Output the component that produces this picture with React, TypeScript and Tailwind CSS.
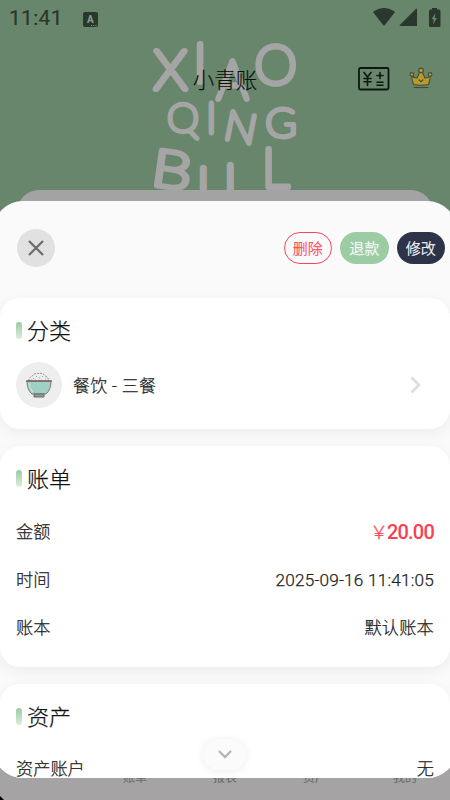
import React from 'react';

const LOGO_LETTERS = [
  { char: 'X', x: 170.5, y: 88.5, size: 54, width: 1.02, rotate: 0, stroke: 6 },
  { char: 'I', x: 200, y: 82, size: 54, width: 1, rotate: 0, stroke: 6 },
  { char: 'A', x: 232.5, y: 98.500, size: 53, width: 0.92, rotate: 0, stroke: 6 },
  { char: 'O', x: 275.7, y: 84, size: 54, width: 1, rotate: 0, stroke: 5.8 },
  { char: 'Q', x: 183, y: 132, size: 40, width: 1.02, rotate: 0, stroke: 4.5 },
  { char: 'I', x: 211.3, y: 132.5, size: 41, width: 1, rotate: 0, stroke: 4.8 },
  { char: 'N', x: 238, y: 141.5, size: 41, width: 1.05, rotate: 11, stroke: 4.6 },
  { char: 'G', x: 281, y: 137, size: 40, width: 1.05, rotate: 0, stroke: 4.8 },
  { char: 'B', x: 169.5, y: 187.500, size: 51, width: 1.25, rotate: 8, stroke: 5.5 },
  { char: 'I', x: 203.3, y: 200, size: 45, width: 1, rotate: 0, stroke: 6.5 },
  { char: 'I', x: 230.3, y: 197, size: 45, width: 1, rotate: 0, stroke: 6.5 },
  { char: 'L', x: 275.5, y: 187, size: 53, width: 1.02, rotate: 0, stroke: 5.8 },
];

const TABS = ['', '账单', '报表', '资产', '我的'];

const BILL_ROWS = [
  { label: '时间', value: '2025-09-16 11:41:05' },
  { label: '账本', value: '默认账本' },
];

function StatusBar() {
  return (
    <div className="flex h-9 items-center pl-[9px] pr-[9px] pt-[2px] text-[#29372c]">
      <span className="w-[74px] text-[21px] font-normal tracking-[0.3px] [-webkit-text-stroke:0.2px]">11:41</span>
      <svg width="15" height="15" viewBox="0 0 15 15">
        <rect width="15" height="15" rx="2" fill="currentColor" />
        <text x="7.3" y="10.8" fontSize="10" fontWeight="700" textAnchor="middle" fill="#8aa18e">A</text>
        <path d="M8 13.5h1M10.2 13.5h1M12.4 13.5h1" stroke="#8aa18e" />
      </svg>
      <svg className="ml-auto overflow-visible" width="69" height="20" viewBox="0 0 69 20" fill="currentColor">
        <path d="M1 3Q12-5 23 3L12.500 16.500h-1z" />
        <path d="M45 -.2V17H28.200q-1.200 0-.4-1L43.800 0q1.200-.9 1.200-.2z" />
        <path d="M60 .5V-1h5V.5h2q1.500 0 1.500 1.500v14.500q0 1.500-1.500 1.500h-8.500q-1.500 0-1.500-1.500V2q0-1.500 1.500-1.500z" />
        <path d="M63.500 4l-4 6.200h2.300l-.8 5.200 4-6.500h-2.300z" fill="#67866c" />
      </svg>
    </div>
  );
}

function Logo() {
  return (
    <svg className="absolute left-0 top-0" width="450" height="201" viewBox="0 0 450 201">
      {LOGO_LETTERS.map((l, i) => (
        <text
          key={i}
          transform={`translate(${l.x} ${l.y}) rotate(${l.rotate}) scale(${l.width} 1)`}
          textAnchor="middle"
          fontFamily="Lato"
          fontWeight="100"
          fontSize={l.size}
          fill="#a5a5a5"
          stroke="#a5a5a5"
          strokeWidth={l.stroke}
          strokeLinejoin="round"
        >
          {l.char}
        </text>
      ))}
    </svg>
  );
}

function TopBar() {
  return (
    <div className="relative flex h-[88px] items-center justify-center">
      <span className="pt-[3px] text-[21.500px] font-light text-[#0c100d] [-webkit-text-stroke:0.2px]">小青账</span>
      <svg className="absolute left-[358px] top-[31px]" width="32" height="24" viewBox="0 0 32 24" fill="none" stroke="#0e1711" strokeWidth="1.800" strokeLinecap="round">
        <rect x="1" y="1" width="29.500" height="21.500" rx="1.500" />
        <path d="M6 5.500l3.500 4.500L13 5.500M9.500 10v8.500M6 11.500h7M6 14.800h7M19 8.500h6M22 5.500v6M19 15.200h6M19 18.200h6" strokeWidth="1.600" />
      </svg>
      <svg className="absolute left-[409px] top-[31px]" width="24" height="22" viewBox="0 0 24 22" stroke="#454b3b" strokeWidth="1.100">
        <path d="M4.500 17.500Q3 13 2.500 8.500q3 3 5.500 2.500L11 4.500h2l3 6.500q3 .5 5.500-2.500Q21 13 19.500 17.500q-7.500 1.500-15 0z" fill="#b79b2b" />
        <circle cx="12" cy="3.400" r="2.300" fill="#b79b2b" />
        <circle cx="2.900" cy="7.400" r="1.800" fill="#b79b2b" />
        <circle cx="21.100" cy="7.400" r="1.800" fill="#b79b2b" />
        <path d="M9.800 12.500l2.200 2.300 2.200-2.300" fill="none" />
        <path d="M4.500 20.500h15" />
      </svg>
    </div>
  );
}

function RiceBowl() {
  return (
    <svg width="28" height="26" viewBox="0 0 28 26">
      <path d="M4 9Q3.500 5.500 7 4.500 9 1 13 1.500q5-1 7 2.500 3.500 1 3.500 5z" fill="#efeeee" stroke="#7f726e" strokeWidth=".8" strokeDasharray="2 1" />
      <path d="M8 6.500h1M11 4.500h1M14 6h1M17 4.500h1M10 8h1M6 8h1M16 8h1M20 7h1" stroke="#9b8f8b" strokeWidth=".8" />
      <path d="M2 9h24q0 9-5 13H7Q2 18 2 9z" fill="#9fd0c6" stroke="#786c61" strokeWidth=".9" />
      <path d="M1 9h26" stroke="#75584d" strokeWidth="1.200" />
      <path d="M4 11q.5 6 4 9" fill="none" stroke="#c1e3dc" strokeWidth="1.500" />
      <path d="M9 22h10v3H9z" fill="#78aaa1" stroke="#75584d" strokeWidth=".9" />
    </svg>
  );
}

function SectionTitle({ children }: { children: React.ReactNode }) {
  return (
    <div className="flex h-8 items-center">
      <span className="-mt-px h-[17px] w-[6px] rounded-full bg-gradient-to-b from-[#9bcba1] to-[#dceedd]" />
      <h2 className="ml-[5px] pt-px text-[22px] font-light leading-8 text-[#111]">{children}</h2>
    </div>
  );
}

function Card({ className, children }: { className: string; children: React.ReactNode }) {
  return (
    <section className={`shrink-0 rounded-[20px] bg-white px-4 pt-[17px] shadow-[0_4px_14px_rgba(0,0,0,0.06)] ${className}`}>
      {children}
    </section>
  );
}

export default function App() {
  return (
    <div className="relative h-[800px] w-[450px] overflow-hidden bg-[#67866c] font-[Roboto,'Noto_Sans_CJK_SC',sans-serif]">
      <Logo />
      <div className="relative">
        <StatusBar />
        <TopBar />
      </div>
      <div className="relative mx-[17px] mt-[66px] h-8 rounded-t-[22px] bg-[#a3a3a3]" />
      <div className="absolute inset-x-0 bottom-0 flex h-[60px] justify-around bg-[#a5a3a4] pt-[29px] text-[12px] leading-[18px] text-[#6a686a]">
        {TABS.map((tab, i) => (
          <span key={i} className="w-[90px] text-center">{tab}</span>
        ))}
      </div>
      <svg className="absolute bottom-0 left-0" width="4" height="4" viewBox="0 0 4 4">
        <path d="M0 0l4 4H0z" fill="#000" />
      </svg>

      {/* bill detail sheet */}
      <div className="absolute -inset-x-[7px] top-[201px] flex h-[577px] flex-col overflow-hidden rounded-[30px] bg-[#fafafa] px-[7px] text-[#1c1c1c] [-webkit-text-stroke:0.25px]">
        <header className="flex h-[97px] shrink-0 items-center pb-1 pl-[17px] pr-[5px]">
          <button className="flex size-[38px] items-center justify-center rounded-full bg-[#e1e1e1]">
            <svg width="16" height="16" viewBox="0 0 16 16" stroke="#6c6c6e" strokeWidth="2.200">
              <path d="M1 1l14 14M15 1L1 15" />
            </svg>
          </button>
          <div className="ml-auto flex gap-2 text-[15px] font-light">
            <button className="h-8 w-[48.500px] rounded-full border border-[#fb4555] pt-[3px] text-[#fb4555]">删除</button>
            <button className="h-8 w-[48.500px] rounded-full bg-[#9ccca3] pt-[3px] text-white">退款</button>
            <button className="h-8 w-[48.500px] rounded-full bg-[#2d3349] pt-[3px] text-white">修改</button>
          </div>
        </header>

        <Card className="h-[131px]">
          <SectionTitle>分类</SectionTitle>
          <div className="mt-[15px] flex items-center">
            <div className="flex size-[46px] items-center justify-center rounded-full bg-[#eee]">
              <RiceBowl />
            </div>
            <span className="ml-[11px] pt-[4px] text-[17px] font-light tracking-[0.3px]">餐饮 - 三餐</span>
            <svg className="ml-auto mr-[12px]" width="12" height="18" viewBox="0 0 12 18" fill="none" stroke="#dedede" strokeWidth="2.800">
              <path d="M1.500 1.500L9 9l-7.500 7.500" />
            </svg>
          </div>
        </Card>

        <Card className="mt-[17px] h-[221px]">
          <SectionTitle>账单</SectionTitle>
          <div className="mt-[14px] flex h-12 items-center justify-between text-[17.200px] font-light">
            <span>金额</span>
            <span className="-mt-[2px] flex items-center text-[20px] text-[#fb4050]">
              <span className="w-[17px] text-[18px]">￥</span>
              <span className="font-medium tracking-[-0.8px] [-webkit-text-stroke:0]">20.00</span>
            </span>
          </div>
          {BILL_ROWS.map(row => (
            <div key={row.label} className="flex h-12 items-center justify-between text-[17.200px] font-light">
              <span>{row.label}</span>
              <span className="tracking-[0.2px]">{row.value}</span>
            </div>
          ))}
        </Card>

        <Card className="mt-[17px] h-[140px]">
          <SectionTitle>资产</SectionTitle>
          <div className="mt-[13px] flex h-12 items-center justify-between text-[17.200px] font-light">
            <span>资产账户</span>
            <span>无</span>
          </div>
        </Card>
      </div>

      <button className="absolute left-[203px] top-[739px] flex h-[31px] w-[43px] items-center justify-center rounded-full bg-[#fbfbfb] shadow-[0_1px_8px_rgba(0,0,0,0.08)]">
        <svg width="14" height="9" viewBox="0 0 14 9" fill="none" stroke="#b4b4b4" strokeWidth="2.300">
          <path d="M1 1l6 6 6-6" />
        </svg>
      </button>
    </div>
  );
}
